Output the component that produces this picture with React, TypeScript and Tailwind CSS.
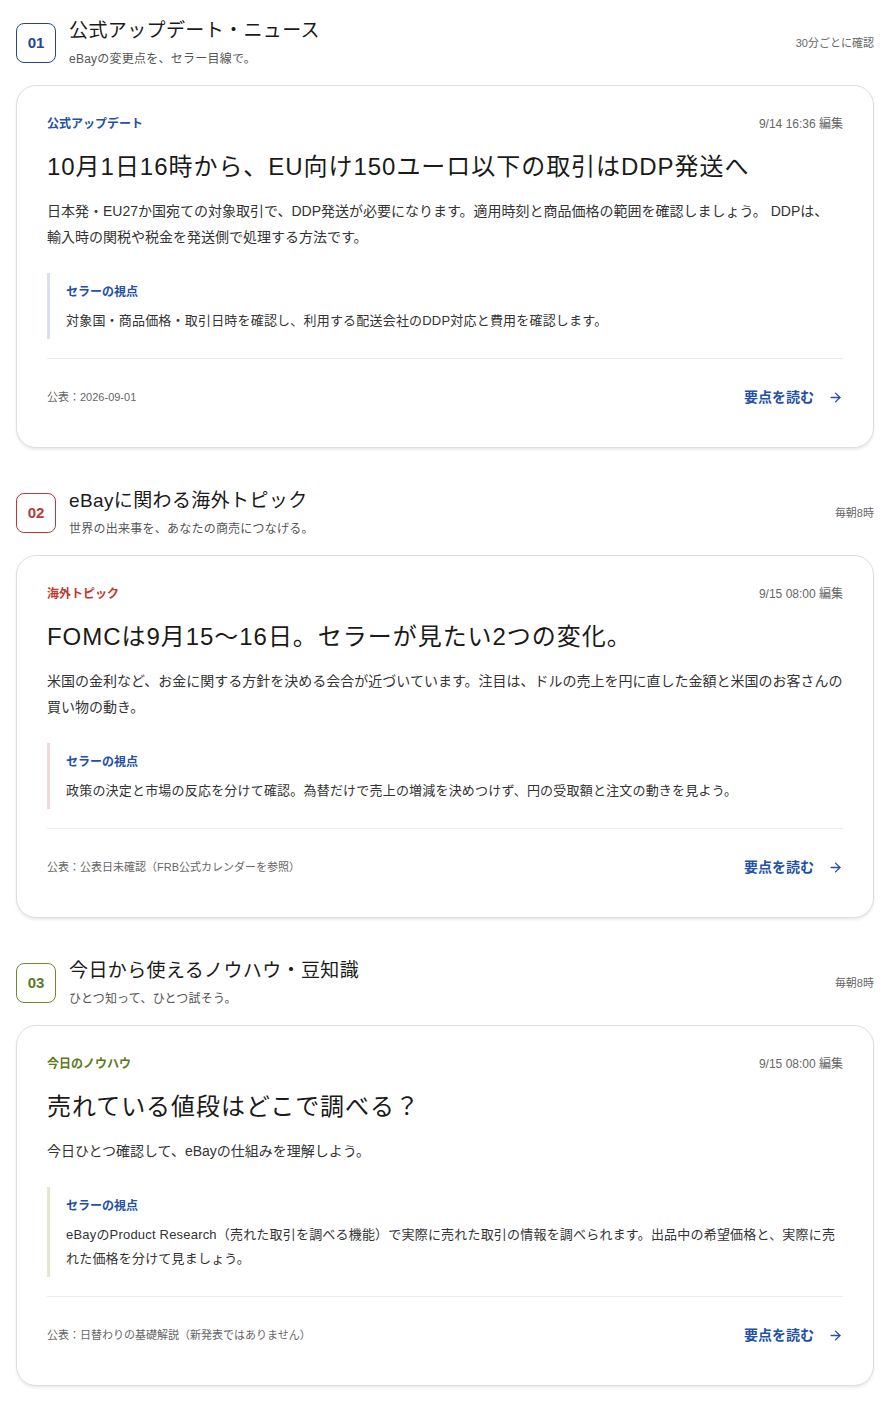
import { ArrowRight } from "lucide-react";

type Tone = "blue" | "red" | "olive";

const badgeTone: Record<Tone, string> = {
  blue: "border-[#24478f] text-[#24478f]",
  red: "border-[#b8393b] text-[#b8393b]",
  olive: "border-[#6f8a2c] text-[#5f7a1f]",
};

const labelTone: Record<Tone, string> = {
  blue: "text-[#2350a8]",
  red: "text-[#c0392f]",
  olive: "text-[#5d7a17]",
};

const calloutTone: Record<Tone, string> = {
  blue: "border-[#d5e1f3]",
  red: "border-[#f0d9d6]",
  olive: "border-[#e5e8c6]",
};

const sections: {
  no: string;
  tone: Tone;
  title: string;
  sub: string;
  schedule: string;
  label: string;
  edited: string;
  headline: string;
  body: string;
  view: string;
  published: string;
}[] = [
  {
    no: "01",
    tone: "blue",
    title: "公式アップデート・ニュース",
    sub: "eBayの変更点を、セラー目線で。",
    schedule: "30分ごとに確認",
    label: "公式アップデート",
    edited: "9/14 16:36 編集",
    headline: "10月1日16時から、EU向け150ユーロ以下の取引はDDP発送へ",
    body: "日本発・EU27か国宛ての対象取引で、DDP発送が必要になります。適用時刻と商品価格の範囲を確認しましょう。 DDPは、\n輸入時の関税や税金を発送側で処理する方法です。",
    view: "対象国・商品価格・取引日時を確認し、利用する配送会社のDDP対応と費用を確認します。",
    published: "公表：2026-09-01",
  },
  {
    no: "02",
    tone: "red",
    title: "eBayに関わる海外トピック",
    sub: "世界の出来事を、あなたの商売につなげる。",
    schedule: "毎朝8時",
    label: "海外トピック",
    edited: "9/15 08:00 編集",
    headline: "FOMCは9月15〜16日。セラーが見たい2つの変化。",
    body: "米国の金利など、お金に関する方針を決める会合が近づいています。注目は、ドルの売上を円に直した金額と米国のお客さんの買い物の動き。",
    view: "政策の決定と市場の反応を分けて確認。為替だけで売上の増減を決めつけず、円の受取額と注文の動きを見よう。",
    published: "公表：公表日未確認（FRB公式カレンダーを参照）",
  },
  {
    no: "03",
    tone: "olive",
    title: "今日から使えるノウハウ・豆知識",
    sub: "ひとつ知って、ひとつ試そう。",
    schedule: "毎朝8時",
    label: "今日のノウハウ",
    edited: "9/15 08:00 編集",
    headline: "売れている値段はどこで調べる？",
    body: "今日ひとつ確認して、eBayの仕組みを理解しよう。",
    view: "eBayのProduct Research（売れた取引を調べる機能）で実際に売れた取引の情報を調べられます。出品中の希望価格と、実際に売れた価格を分けて見ましょう。",
    published: "公表：日替わりの基礎解説（新発表ではありません）",
  },
];

export default function App() {
  return (
    <main className="min-h-screen bg-white px-4 pt-[18px] pb-6 text-[#222] font-['Liberation_Sans','Noto_Sans_CJK_JP',sans-serif]">
      <div className="flex flex-col gap-10">
        {sections.map((s) => (
          <section key={s.no}>
            {/* section header */}
            <div className="flex items-center">
              <div
                className={`flex h-10 w-10 shrink-0 items-center justify-center rounded-lg border bg-white text-[15px] font-bold ${badgeTone[s.tone]}`}
              >
                {s.no}
              </div>
              <div className="ml-[13px] flex-1">
                <h2 className="text-[19px] leading-[26px] tracking-[0.02em] text-[#1a1a1a]">{s.title}</h2>
                <p className="mt-[6px] text-[12px] leading-[18px] tracking-[0.02em] text-[#555]">{s.sub}</p>
              </div>
              <span className="text-[11px] text-[#666]">{s.schedule}</span>
            </div>

            {/* card */}
            <article className="mt-[17px] rounded-[20px] border border-[#dedede] bg-white px-[30px] pt-[30px] pb-10 shadow-[0_2px_3px_rgba(0,0,0,0.08)]">
              <div className="flex items-center justify-between">
                <span className={`text-[12px] font-bold leading-4 ${labelTone[s.tone]}`}>{s.label}</span>
                <span className="text-[12px] leading-4 text-[#666]">{s.edited}</span>
              </div>
              <h3 className="mt-5 text-[24px] leading-[30px] tracking-[0.04em] text-[#1a1a1a]">{s.headline}</h3>
              <p className="mt-4 whitespace-pre-line text-[14px] leading-[26px] text-[#333]">{s.body}</p>

              <div className={`mt-[23px] border-l-[3px] pl-4 pt-2.5 pb-1.5 ${calloutTone[s.tone]}`}>
                <p className="text-[12px] font-bold leading-[18px] text-[#2350a8]">セラーの視点</p>
                <p className="mt-2 text-[13px] leading-6 tracking-[0.015em] text-[#333]">{s.view}</p>
              </div>

              <div className="mt-[19px] flex items-center justify-between border-t border-[#ececec] pt-7">
                <span className="text-[11px] leading-5 text-[#666]">{s.published}</span>
                <a href="#" className="flex items-center gap-3.5 text-[14px] font-bold leading-5 text-[#2350a8]">
                  要点を読む
                  <ArrowRight size={15} strokeWidth={2.2} />
                </a>
              </div>
            </article>
          </section>
        ))}
      </div>
    </main>
  );
}
